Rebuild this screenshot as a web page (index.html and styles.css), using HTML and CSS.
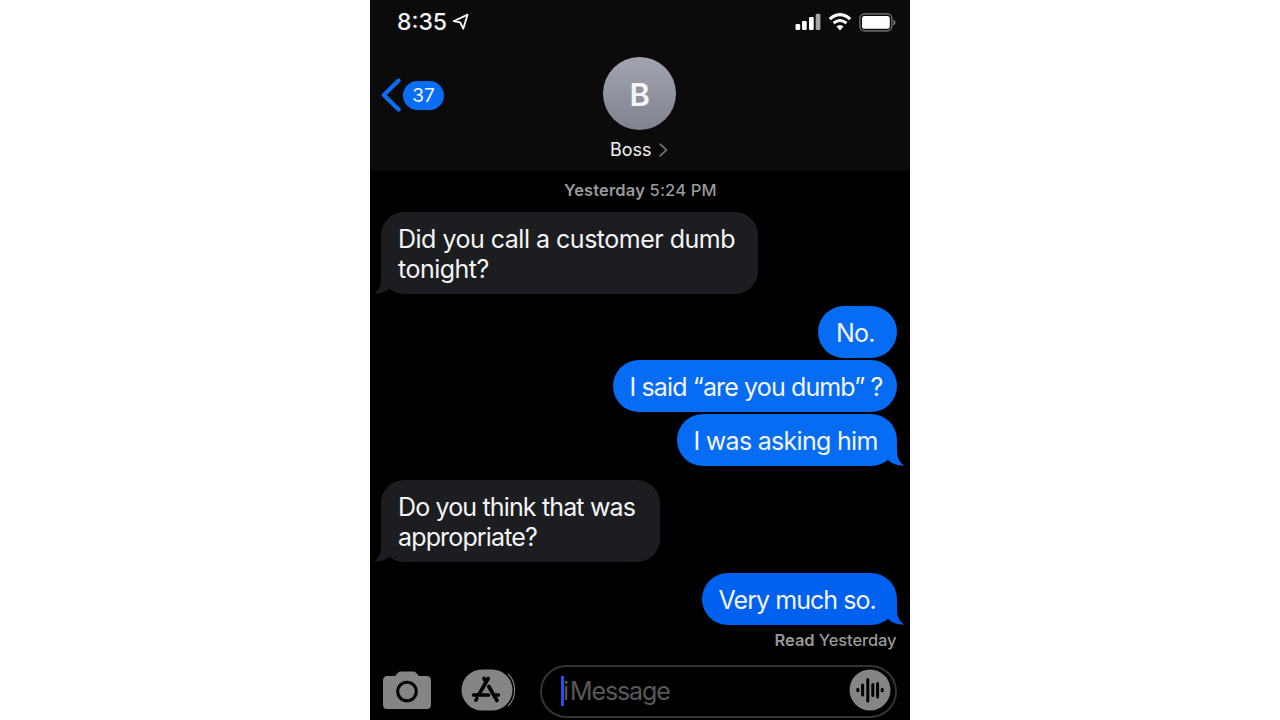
FILE: index.html
```html
<!DOCTYPE html>
<html lang="en">
<head>
    <meta charset="UTF-8">
    <meta name="viewport" content="width=device-width, initial-scale=1.0">
    <title>Messages - Boss</title>
    <link rel="stylesheet" href="styles.css">
</head>
<body>

    <div class="phone">

        <!-- Header: status bar and contact -->
        <header class="header">
            <div class="status-bar">
                <div class="status-time">
                    <span class="time">8:35</span>
                    <svg class="location" width="18" height="18" viewBox="0 0 18 18" fill="none" stroke="#fff" stroke-width="1.8" stroke-linejoin="round">
                        <path d="M1.6 8.2L15.6 1.6L11.2 15.7L8.2 9.4Z"/>
                    </svg>
                </div>
                <div class="status-icons">
                    <svg width="26" height="18" viewBox="0 0 26 18" fill="#fff">
                        <rect x="0.5" y="11" width="4.7" height="6" rx="1.2"/>
                        <rect x="7" y="8" width="4.7" height="9" rx="1.2"/>
                        <rect x="14" y="4" width="4.7" height="13" rx="1.2"/>
                        <rect x="20.7" y="0.7" width="4.7" height="16.3" rx="1.2" fill="#a5a5a5"/>
                    </svg>
                    <svg width="24" height="18" viewBox="0 0 24 18">
                        <path d="M1.8 6.1Q12 -2.8 22.2 6.1" fill="none" stroke="#fff" stroke-width="3.2"/>
                        <path d="M5.6 10.2Q12 4.7 18.4 10.2" fill="none" stroke="#fff" stroke-width="3"/>
                        <path d="M8.4 13.6Q12 10.3 15.6 13.6L12 17.6Z" fill="#fff"/>
                    </svg>
                    <svg width="37" height="19" viewBox="0 0 37 19">
                        <rect x="0.9" y="0.9" width="32" height="17" rx="4.6" fill="none" stroke="#626262" stroke-width="1.6"/>
                        <rect x="3" y="3" width="27.8" height="12.8" rx="2.6" fill="#fff"/>
                        <path d="M34.4 6.4Q36.6 7.2 36.6 9.4Q36.6 11.6 34.4 12.4Z" fill="#707070"/>
                    </svg>
                </div>
            </div>

            <div class="nav">
                <div class="back">
                    <svg width="20" height="34" viewBox="0 0 20 34" fill="none" stroke="#0a6df5" stroke-width="4.2" stroke-linecap="round" stroke-linejoin="round">
                        <path d="M17.6 2.4L2.8 17L17.6 31.6"/>
                    </svg>
                    <span class="unread">37</span>
                </div>
                <div class="contact">
                    <div class="avatar">B</div>
                    <div class="contact-name">
                        <span>Boss</span>
                        <svg width="9" height="14" viewBox="0 0 9 14" fill="none" stroke="#77777c" stroke-width="1.7" stroke-linecap="round">
                            <path d="M1.2 1.2L7.4 7L1.2 12.8"/>
                        </svg>
                    </div>
                </div>
            </div>
        </header>

        <!-- Conversation -->
        <main class="messages">
            <div class="timestamp"><b>Yesterday</b> 5:24 PM</div>

            <div class="bubble received msg-call">
                Did you call a customer dumb<br>tonight?
                <svg class="tail" width="24" height="24" viewBox="0 0 24 24"><path d="M7 0V9Q7 19 0 23.5Q9 24 15.5 18.5L20 0Z"/></svg>
            </div>
            <div class="bubble sent msg-no">No.</div>
            <div class="bubble sent msg-said">I said “are you dumb” ?</div>
            <div class="bubble sent msg-asking">
                I was asking him
                <svg class="tail" width="24" height="24" viewBox="0 0 24 24"><path d="M17 0V9Q17 19 24 23.5Q15 24 8.5 18.5L4 0Z"/></svg>
            </div>
            <div class="bubble received msg-think">
                Do you think that was<br>appropriate?
                <svg class="tail" width="24" height="24" viewBox="0 0 24 24"><path d="M7 0V9Q7 19 0 23.5Q9 24 15.5 18.5L20 0Z"/></svg>
            </div>
            <div class="bubble sent msg-very">
                Very much so.
                <svg class="tail" width="24" height="24" viewBox="0 0 24 24"><path d="M17 0V9Q17 19 24 23.5Q15 24 8.5 18.5L4 0Z"/></svg>
            </div>
            <div class="receipt"><b>Read</b> Yesterday</div>
        </main>

        <!-- Compose bar -->
        <footer class="compose">
            <svg class="camera" width="48" height="38" viewBox="0 0 48 38">
                <path d="M4.5 5H12L15 1.8Q16 0.5 18 0.5H30Q32 0.5 33 1.8L36 5H43.5Q48 5 48 9.5V33.5Q48 38 43.5 38H4.5Q0 38 0 33.5V9.5Q0 5 4.5 5Z" fill="#858585"/>
                <circle cx="24" cy="20.5" r="9.3" fill="none" stroke="#000" stroke-width="3"/>
            </svg>
            <svg class="apps" width="56" height="42" viewBox="0 0 56 42">
                <path d="M47 5Q53.6 11 53.6 21Q53.6 31 47 37" fill="none" stroke="#858585" stroke-width="1.1"/>
                <rect x="0.5" y="0.5" width="51" height="41" rx="20.5" fill="#858585"/>
                <g fill="none" stroke="#000" stroke-width="3.7" stroke-linecap="round">
                    <path d="M27.2 9.5L18 25.2M15.8 29.5L15 31"/>
                    <path d="M23 9.5L24.7 12.3M27.8 17.5L36 31.5"/>
                    <path d="M12.6 26H27.5M33.5 26H37.3"/>
                </g>
            </svg>
            <div class="input">
                <span class="caret"></span>
                <span class="placeholder"><span class="first-letter">i</span>Message</span>
                <svg class="audio" width="42" height="42" viewBox="0 0 42 42">
                    <circle cx="21" cy="21" r="20.5" fill="#858585"/>
                    <g stroke="#000" stroke-width="3" stroke-linecap="round">
                        <path d="M8.8 20.3V21.7M13.6 16V26M18.8 10.5V32M23.8 15.5V26.5M28.6 14.5V28M33.2 20.3V21.7"/>
                    </g>
                </svg>
            </div>
        </footer>

    </div>

</body>
</html>
```
FILE: styles.css
```css
/* General Styles */
* {
    box-sizing: border-box;
}

body {
    margin: 0;
    height: 100vh;
    display: flex;
    justify-content: center;
    background-color: #fff;
    font-family: Inter, "Liberation Sans", sans-serif;
    overflow: hidden;
}

svg {
    display: block;
    flex-shrink: 0;
}

.phone {
    width: 540px;
    height: 720px;
    display: flex;
    flex-direction: column;
    background-color: #000;
    color: #f4f4f4;
    overflow: hidden;
}

/* Header Section */
.header {
    height: 171px;
    flex-shrink: 0;
    background-color: #0b0b0b;
}

.status-bar {
    height: 44px;
    display: flex;
    justify-content: space-between;
    align-items: center;
    padding: 0 14.5px 0 27px;
}

.status-time,
.status-icons {
    display: flex;
    align-items: center;
}

.status-time {
    gap: 5px;
}

.status-icons {
    gap: 7px;
}

.time {
    font-size: 23px;
    font-weight: 500;
    line-height: 46px;
}

.nav {
    display: grid;
    grid-template-columns: 1fr auto 1fr;
    padding: 13px 11.5px 0 11px;
}

.back {
    display: flex;
    align-items: center;
    gap: 2px;
    height: 76px;
}

.unread {
    width: 41px;
    height: 29px;
    border-radius: 15px;
    background-color: #0a6df5;
    font-size: 19px;
    line-height: 29px;
    text-align: center;
}

.contact {
    display: flex;
    flex-direction: column;
    align-items: center;
}

.avatar {
    width: 73px;
    height: 73px;
    border-radius: 50%;
    background: linear-gradient(#a2a4b0, #80828f);
    font-size: 31px;
    font-weight: 600;
    line-height: 75px;
    text-align: center;
}

.contact-name {
    display: flex;
    align-items: center;
    gap: 7px;
    margin: 8px 2px 0 0;
    font-size: 18px;
    line-height: 24px;
}

/* Conversation */
.messages {
    display: flex;
    flex-direction: column;
    padding: 8px 13.5px 0 11px;
}

.timestamp,
.receipt {
    color: #98989d;
    font-size: 16.5px;
    font-weight: 500;
    line-height: 22px;
}

.timestamp {
    align-self: center;
    margin: 0 0 11px 3px;
    letter-spacing: 0.15px;
}

.timestamp b,
.receipt b {
    font-weight: 600;
}

.bubble {
    position: relative;
    border-radius: 26px;
    padding: 12px 17px 9px;
    font-size: 25px;
    line-height: 30px;
    white-space: nowrap;
}

.received {
    align-self: flex-start;
    height: 82px;
    border-radius: 23px;
    background-color: #1c1d20;
    fill: #1c1d20;
}

.sent {
    align-self: flex-end;
    height: 52px;
    background-color: #056cf3;
    fill: #056cf3;
}

.tail {
    position: absolute;
    bottom: 0;
}

.received .tail {
    left: -7px;
}

.sent .tail {
    right: -7px;
}

.msg-call {
    width: 377px;
    margin-bottom: 12px;
    letter-spacing: -0.5px;
}

.msg-no {
    width: 79px;
    margin-bottom: 2px;
    padding-left: 18.5px;
    letter-spacing: -0.8px;
}

.msg-said {
    width: 284px;
    margin-bottom: 2px;
    letter-spacing: -0.87px;
}

.msg-asking {
    width: 220px;
    margin-bottom: 14px;
    letter-spacing: -0.7px;
}

.msg-think {
    width: 279px;
    margin-bottom: 11px;
    letter-spacing: -0.85px;
}

.msg-very {
    width: 195px;
    background-color: #0060f0;
    fill: #0060f0;
    letter-spacing: -0.95px;
}

.receipt {
    align-self: flex-end;
    margin-top: 4px;
    letter-spacing: -0.1px;
}

/* Compose Bar */
.compose {
    display: flex;
    align-items: center;
    height: 56px;
    margin-top: auto;
    padding: 0 13px 4px;
}

.apps {
    margin-left: 30px;
}

.input {
    display: flex;
    align-items: center;
    width: 357px;
    height: 53px;
    margin: 2px 0 0 23px;
    padding: 0 3px 0 19px;
    border: 2px solid #343436;
    border-radius: 27px;
}

.caret {
    width: 3px;
    height: 30px;
    background-color: #2850e6;
}

.placeholder {
    margin-left: -1px;
    color: #58585b;
    font-size: 25px;
    letter-spacing: -1.1px;
}

.first-letter {
    margin-right: 2px;
}

.audio {
    margin: -2px 1px 0 auto;
}
```
